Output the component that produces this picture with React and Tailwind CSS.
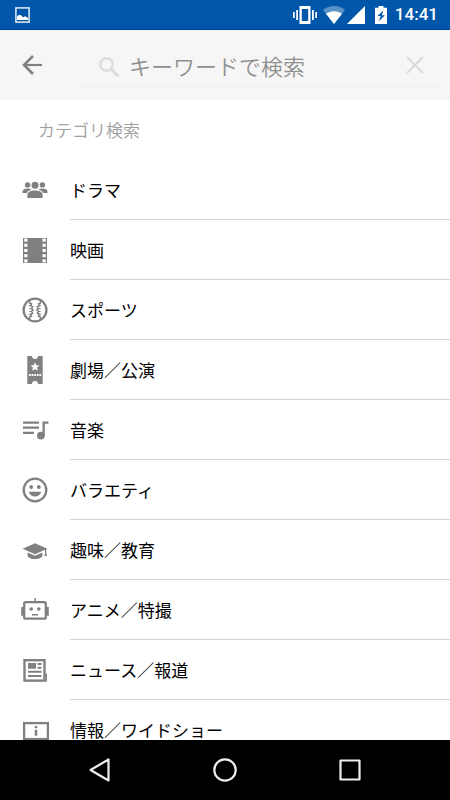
import React, { useState } from "react";

// Category icons share a 30x30 grid
const Icon = ({ children }) => (
  <svg viewBox="0 0 30 30" className="size-[30px] shrink-0" fill="#808080" aria-hidden="true">
    {children}
  </svg>
);

const PeopleIcon = () => (
  <Icon>
    <circle cx="15" cy="10.3" r="3.5" />
    <circle cx="7.6" cy="9.9" r="2.7" />
    <circle cx="22.4" cy="9.9" r="2.7" />
    <path d="M7.4 23v-3.4c0-2.6 3.4-4.1 7.6-4.1s7.6 1.5 7.6 4.1V23z" />
    <path d="M2.5 18v-1.2c0-2 2.4-3.2 5.1-3.2 1.5 0 2.9.4 3.9 1-2.4.8-4 1.9-4.7 3.4z" />
    <path d="M27.5 18v-1.2c0-2-2.4-3.2-5.1-3.2-1.5 0-2.9.4-3.9 1 2.4.8 4 1.9 4.7 3.4z" />
  </Icon>
);

const FilmIcon = () => (
  <Icon>
    <rect x="3" y="3" width="24" height="25" />
    {[3.6, 8.8, 14, 19.2, 24.4].map((y) => (
      <g key={y} fill="#fff">
        <rect x="4.2" y={y} width="3.3" height="3" />
        <rect x="22.5" y={y} width="3.3" height="3" />
      </g>
    ))}
  </Icon>
);

const BaseballIcon = () => (
  <Icon>
    <g fill="none" stroke="#808080">
      <circle cx="15" cy="15" r="11.4" strokeWidth="2.3" />
      {/* Zigzag seams */}
      <path
        d="M9.5 5.5l.3 2.800 1.700.4-.7 2 1.900 1.100-1.200 1.800 1.600 1.400-1.600 1.400 1.200 1.800-1.900 1.100.7 2-1.700.4-.3 2.800M20.500 5.500l-.3 2.800-1.700.4.7 2-1.900 1.100 1.200 1.800-1.600 1.400 1.600 1.400-1.200 1.800 1.900 1.100-.7 2 1.700.4.3 2.800"
        strokeWidth="1.5"
      />
      <path d="M10.800 10.700l-2-.2M11.500 13.600l-2.200-.3M11.500 16.400l-2.200.3M10.800 19.300l-2 .2M19.200 10.700l2-.2M18.500 13.600l2.200-.3M18.500 16.400l2.200.3M19.200 19.300l2 .2" />
    </g>
  </Icon>
);

const TicketIcon = () => (
  <Icon>
    <path d="M7.3 1H12a3 3 0 0 0 6 0h4.700v28H18a3 3 0 0 0-6 0H7.300z" />
    <path d="M15 7.200l1.300 3 3.200.3-2.400 2.100.7 3.200-2.800-1.700-2.800 1.700.7-3.200-2.400-2.100 3.200-.3z" fill="#fff" />
    <path d="M9 20h12.5" stroke="#fff" strokeWidth="1.8" strokeDasharray="1.8 .8" />
  </Icon>
);

const MusicIcon = () => (
  <Icon>
    <path d="M3 6.500h16v2.300H3zM3 11.500h16v2.300H3zM3 16.700h11V19H3z" />
    <path d="M22.500 6.500h5.900v2.300h-3.600v12h-2.300z" />
    <circle cx="20.9" cy="20.6" r="3.9" />
  </Icon>
);

const SmileIcon = () => (
  <Icon>
    <circle cx="15" cy="15" r="11.3" fill="none" stroke="#808080" strokeWidth="2.3" />
    <circle cx="11.2" cy="12" r="1.9" />
    <circle cx="18.8" cy="12" r="1.9" />
    <path d="M8.700 16.700h12.600c-.9 3-3.300 4.800-6.300 4.800s-5.400-1.800-6.300-4.800z" />
  </Icon>
);

const CapIcon = () => (
  <Icon>
    <path d="M2.600 13.700L15 8.200l12.400 5.500L15 19.300z" />
    <path d="M7.600 17.500L15 20.800l7.400-3.300v4c-1.600 1.700-4.300 2.600-7.400 2.600s-5.800-.9-7.400-2.600z" />
    <path d="M25 13.700h1.300v4.500l.7 2.700h-2.700l.7-2.700z" />
  </Icon>
);

const RobotIcon = () => (
  <Icon>
    <rect x="4.2" y="7.2" width="21.6" height="16.5" rx="1.5" fill="none" stroke="#808080" strokeWidth="2.3" />
    <path d="M14.500 3h1.400v4h-1.400zM1.200 12h2.300v8.700H1.200zM26.500 12h2.300v8.700h-2.300zM12 18.900h6v1.700h-6z" />
    <circle cx="11.2" cy="14" r="1.8" />
    <circle cx="18.8" cy="14" r="1.8" />
  </Icon>
);

const NewsIcon = () => (
  <Icon>
    <rect x="4.5" y="5.2" width="20" height="20.4" fill="none" stroke="#808080" strokeWidth="2.4" />
    <path d="M25.500 18.500h1.500v7a1.200 1.200 0 0 1-1.500 1.200z" />
    <path d="M8 8h8v5.800H8zM17.600 8h3.900v2h-3.900zM17.600 11.800h3.900v2h-3.900zM8 15.800h13.500v1.900H8zM8 20h13.500v2H8z" />
  </Icon>
);

const InfoIcon = () => (
  <Icon>
    <rect x="4.1" y="8.1" width="23.8" height="16" fill="none" stroke="#808080" strokeWidth="2.3" />
    <path d="M14.700 11h2.600v2.200h-2.600zM14.700 14.800h2.600v6h-2.600z" />
  </Icon>
);

const categories = [
  { title: "ドラマ", icon: <PeopleIcon /> },
  { title: "映画", icon: <FilmIcon /> },
  { title: "スポーツ", icon: <BaseballIcon /> },
  { title: "劇場／公演", icon: <TicketIcon /> },
  { title: "音楽", icon: <MusicIcon /> },
  { title: "バラエティ", icon: <SmileIcon /> },
  { title: "趣味／教育", icon: <CapIcon /> },
  { title: "アニメ／特撮", icon: <RobotIcon /> },
  { title: "ニュース／報道", icon: <NewsIcon /> },
  { title: "情報／ワイドショー", icon: <InfoIcon /> },
];

const StatusBar = () => (
  <div className="flex h-[30px] shrink-0 items-center justify-between border-b border-[#003c94] bg-[#0057aa] pl-[15px] pr-3 text-white">
    {/* Picture notification */}
    <svg viewBox="0 0 15 16" className="h-4 w-[15px]" fill="none">
      <rect x=".9" y=".9" width="13.2" height="14.2" stroke="#e3edf7" strokeWidth="1.5" />
      <path d="M2 13v-3.500l2-1.700 2 .4 2 2 2.300-1 2.700 1.800v2z" fill="#fff" />
    </svg>

    <div className="flex items-center">
      {/* Vibrate */}
      <svg viewBox="0 0 24 18" className="mr-1.5 h-[18px] w-6" fill="#fff">
        <path d="M6.500 0h11v18h-11zM8.800 3v12h6.400V3z" fillRule="evenodd" />
        <path d="M3.200 4h1.800v10H3.200zM0 6h1.700v6H0zM19 4h1.800v10H19zM22.300 6H24v6h-1.700z" />
      </svg>
      {/* Wifi */}
      <svg viewBox="0 0 22 18" className="mr-0.5 h-[18px] w-[22px]" fill="#fff">
        <path d="M0 4C3 1.400 6.800 0 11 0s8 1.400 11 4L11 18z" opacity=".35" />
        <path d="M3 7.700C5.200 6.100 8 5.200 11 5.200s5.800.9 8 2.500L11 18z" />
      </svg>
      {/* Signal */}
      <svg viewBox="0 0 18 18" className="mr-2.5 size-[18px]" fill="#fff">
        <path d="M0 18L18 0v18z" />
      </svg>
      {/* Battery */}
      <svg viewBox="0 0 12 18" className="mr-2 h-[18px] w-3">
        <path d="M3.500 0h5v1.800H12V18H0V1.800h3.500z" fill="#fff" />
        <path d="M8.300 4.500L2.500 10h3.200l-1.800 5.300 6-6H6.800z" fill="#0057aa" />
      </svg>
      <span className="font-[Roboto,sans-serif] text-[17px] font-medium leading-none">14:41</span>
    </div>
  </div>
);

const SearchBar = () => {
  const [keyword, setKeyword] = useState("");

  return (
    <header className="flex h-[70px] shrink-0 items-center bg-[#f6f6f6] pl-[22px] pr-[10px]">
      <button type="button" aria-label="戻る" className="mr-[38px]">
        <svg viewBox="0 0 20 20" className="size-5" fill="none" stroke="#808080" strokeWidth="2.2">
          <path d="M20.500 10H2.500" />
          <path d="M11 1L2 10l9 9" strokeWidth="2.6" />
        </svg>
      </button>

      <div className="flex h-11 grow items-center border-b border-[#f0f0f0] pl-[19px] pr-4">
        <svg viewBox="0 -4 21 24" className="mr-[9px] h-6 w-[21px] shrink-0" fill="none" stroke="#dcdcdc">
          <circle cx="7.5" cy="7.5" r="6.3" strokeWidth="2.4" />
          <path d="M12 12l7.500 7.500" strokeWidth="3" />
        </svg>
        <input
          type="text"
          aria-label="キーワードで検索"
          placeholder="キーワードで検索"
          value={keyword}
          onChange={(e) => setKeyword(e.target.value)}
          className="w-0 grow bg-transparent text-[22px] font-[350] leading-8 text-black outline-none placeholder:text-[#909090]"
        />
        <button type="button" aria-label="クリア" onClick={() => setKeyword("")}>
          <svg viewBox="0 0 18 18" className="size-[18px]" fill="none" stroke="#dadada" strokeWidth="2.2">
            <path d="M1 1l16 16M17 1L1 17" />
          </svg>
        </button>
      </div>
    </header>
  );
};

const CategoryItem = ({ title, icon }) => (
  <li>
    <button type="button" className="flex h-[60px] w-full items-center pl-5 text-left">
      {icon}
      <span className="ml-5 flex h-full grow items-center border-b border-[#d4d4d4] text-[17px]">
        {title}
      </span>
    </button>
  </li>
);

// Android navigation buttons
const NavigationBar = () => (
  <nav className="flex h-[60px] shrink-0 items-center justify-center gap-[101px] bg-black">
    <button type="button" aria-label="Back">
      <svg viewBox="0 0 24 24" className="size-6" fill="none" stroke="#eee" strokeWidth="2.2" strokeLinejoin="round">
        <path d="M20.500 1.500v21L2.500 12z" />
      </svg>
    </button>
    <button type="button" aria-label="Home">
      <svg viewBox="0 0 24 24" className="size-6" fill="none" stroke="#eee" strokeWidth="2.2">
        <circle cx="12" cy="12" r="10.7" />
      </svg>
    </button>
    <button type="button" aria-label="Recent apps">
      <svg viewBox="0 0 24 24" className="size-6" fill="none" stroke="#eee" strokeWidth="2.2" strokeLinejoin="round">
        <rect x="2.5" y="2.5" width="19" height="19" />
      </svg>
    </button>
  </nav>
);

const App = () => (
  <div className="flex h-screen flex-col bg-white font-['Noto_Sans_CJK_JP',sans-serif] text-black">
    <StatusBar />
    <SearchBar />

    <main className="min-h-0 grow overflow-y-auto [scrollbar-width:none]">
      <h1 className="flex h-[60px] items-center pl-[38px] text-[17px] font-[350] text-[#a0a0a0]">カテゴリ検索</h1>
      <ul>
        {categories.map((item) => (
          <CategoryItem key={item.title} title={item.title} icon={item.icon} />
        ))}
      </ul>
    </main>

    <NavigationBar />
  </div>
);

export default App;
